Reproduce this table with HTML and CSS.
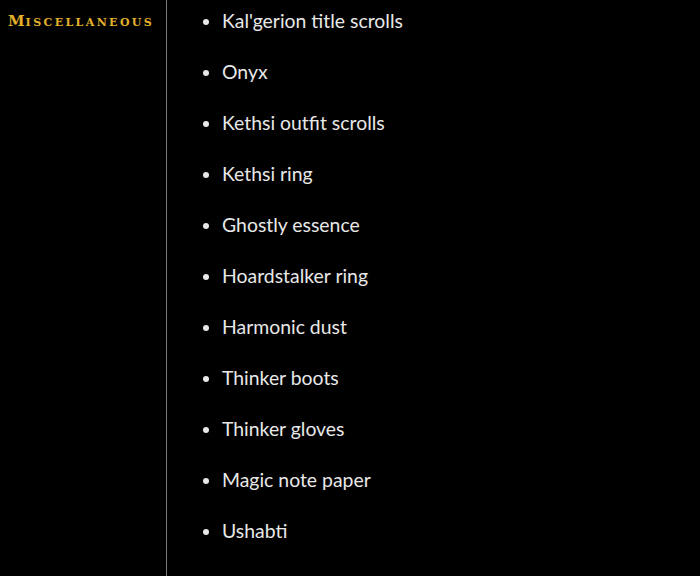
FILE: index.html
```html
<!DOCTYPE html>
<html>
<head>
<meta charset="utf-8">
<link rel="stylesheet" href="styles.css">
</head>
<body>
<div class="row">
  <div class="label">Miscellaneous</div>
  <div class="content">
    <ul class="items">
      <li>Kal'gerion title scrolls</li>
      <li>Onyx</li>
      <li>Kethsi outfit scrolls</li>
      <li>Kethsi ring</li>
      <li>Ghostly essence</li>
      <li>Hoardstalker ring</li>
      <li>Harmonic dust</li>
      <li>Thinker boots</li>
      <li>Thinker gloves</li>
      <li>Magic note paper</li>
      <li>Ushabti</li>
    </ul>
  </div>
</div>
</body>
</html>
```
FILE: styles.css
```css
html, body {
  margin: 0;
  padding: 0;
  background: #000;
  height: 100%;
}
.row {
  display: grid;
  grid-template-columns: 167px 1fr;
  min-height: 576px;
}
.label {
  border-right: 1px solid #7a7a7a;
  padding: 11px 0 0 8px;
  font-family: "DejaVu Serif", serif;
  font-weight: bold;
  text-transform: uppercase;
  font-size: 11px;
  line-height: 20px;
  letter-spacing: 2.4px;
  color: #e2b02a;
}
.label::first-letter {
  font-size: 15px;
  letter-spacing: 1px;
}
.content {
  font-family: Lato, "Open Sans", sans-serif;
  font-size: 19.4px;
  color: #e8e8e8;
}
.items {
  margin: 0;
  padding: 9px 0 0 55px;
}
.items li {
  line-height: 24px;
  margin-bottom: 27.05px;
}
.items li::marker {
  color: #e8e8e8;
}
```
